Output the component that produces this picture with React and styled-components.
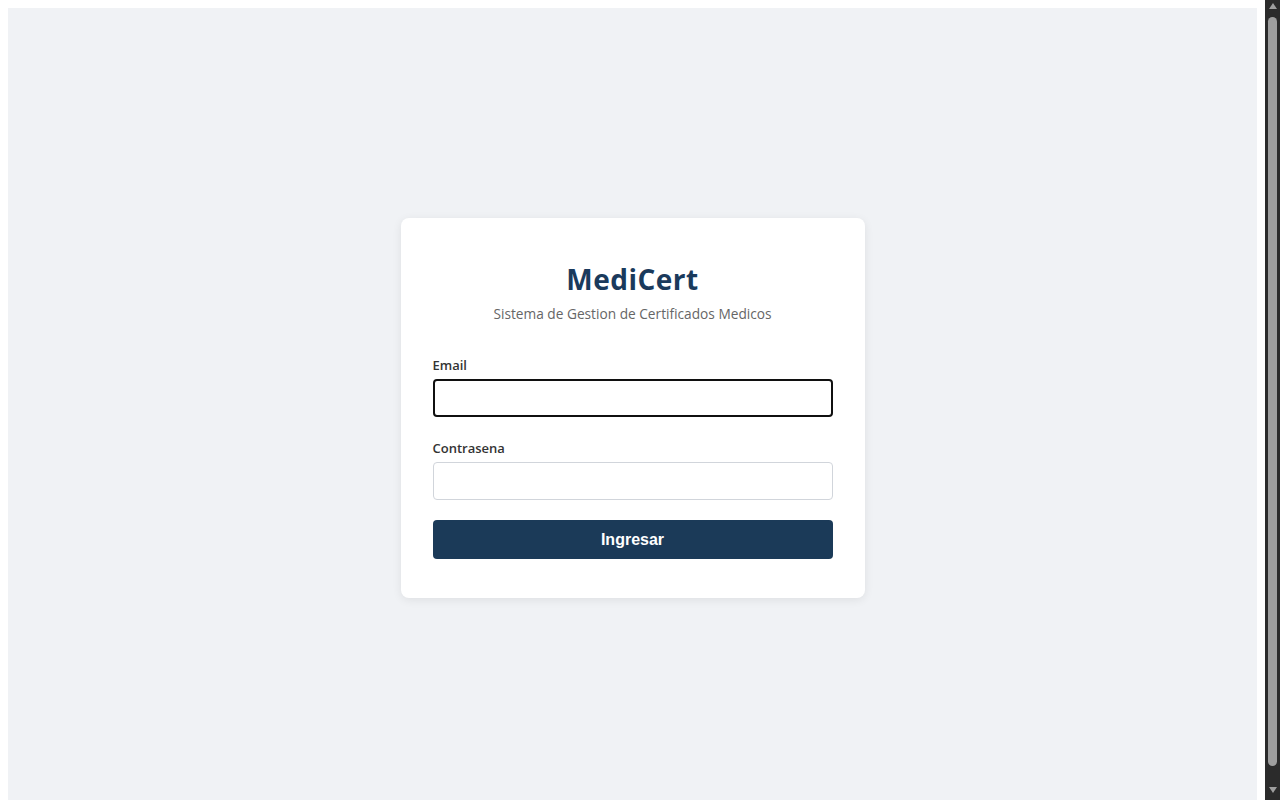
import React from "react";
import styled, { createGlobalStyle } from "styled-components";

const GlobalStyle = createGlobalStyle`
  html {
    background: #ffffff;
  }
  body {
    margin: 8px 23px 8px 8px;
    font-family: "Open Sans", "Noto Sans", sans-serif;
  }
`;

const Page = styled.div`
  min-height: 100vh;
  background: #f0f2f5;
  display: flex;
  align-items: center;
  justify-content: center;
`;

const Card = styled.div`
  width: 400px;
  padding: 40px 32px 39px;
  background: #ffffff;
  border-radius: 8px;
  box-shadow: 0 2px 10px rgba(0, 0, 0, 0.08);
`;

const Header = styled.div`
  text-align: center;
  margin-bottom: 31px;
`;

const Title = styled.h1`
  margin: 0 0 4px;
  font-size: 28px;
  line-height: 42px;
  font-weight: 700;
  color: #1a3a5c;
  letter-spacing: 0.5px;
`;

const Subtitle = styled.p`
  margin: 0;
  font-size: 13.7px;
  line-height: 20px;
  color: #666666;
`;

const Field = styled.div`
  margin-bottom: 21px;

  &:last-of-type {
    margin-bottom: 20px;
  }
`;

const Label = styled.label`
  display: block;
  margin-bottom: 4px;
  font-size: 13px;
  line-height: 20px;
  font-weight: 600;
  color: #333333;
`;

const Input = styled.input`
  box-sizing: border-box;
  display: block;
  width: 100%;
  height: 38px;
  padding: 0 12px;
  font-family: "Open Sans", sans-serif;
  font-size: 14px;
  border-radius: 4px;
  border: ${(p) => (p.$focused ? "2px solid #101010" : "1px solid #d1d5db")};
  background: #ffffff;
  outline: none;
`;

const Button = styled.button`
  display: block;
  width: 100%;
  height: 39px;
  border: none;
  border-radius: 4px;
  background: #1b3a58;
  color: #ffffff;
  font-family: "Liberation Sans", Arial, sans-serif;
  font-size: 16px;
  font-weight: 700;
  cursor: pointer;
`;

// window scrollbar as it appears in the capture
const Scrollbar = styled.div`
  position: fixed;
  top: 0;
  right: 0;
  width: 15px;
  height: 100vh;
  background: #2b2b2b;
  display: flex;
  flex-direction: column;
  align-items: center;
  padding: 3px 0 7px;
  box-sizing: border-box;
`;

const Arrow = styled.div`
  width: 0;
  height: 0;
  border-left: 4.5px solid transparent;
  border-right: 4.5px solid transparent;
  ${(p) =>
    p.$down
      ? "border-top: 6px solid #9e9e9e; margin-top: auto;"
      : "border-bottom: 6px solid #9e9e9e; margin-bottom: 8px;"}
`;

const Thumb = styled.div`
  width: 9px;
  height: 749px;
  border-radius: 4.5px;
  background: #9e9e9e;
`;

export default function App() {
  return (
    <>
      <GlobalStyle />
      <Page>
        <Card>
          <Header>
            <Title>MediCert</Title>
            <Subtitle>Sistema de Gestion de Certificados Medicos</Subtitle>
          </Header>
          <form onSubmit={(e) => e.preventDefault()}>
            <Field>
              <Label htmlFor="email">Email</Label>
              <Input id="email" type="email" $focused autoFocus />
            </Field>
            <Field>
              <Label htmlFor="password">Contrasena</Label>
              <Input id="password" type="password" />
            </Field>
            <Button type="submit">Ingresar</Button>
          </form>
        </Card>
      </Page>
      <Scrollbar aria-hidden="true">
        <Arrow />
        <Thumb />
        <Arrow $down />
      </Scrollbar>
    </>
  );
}
